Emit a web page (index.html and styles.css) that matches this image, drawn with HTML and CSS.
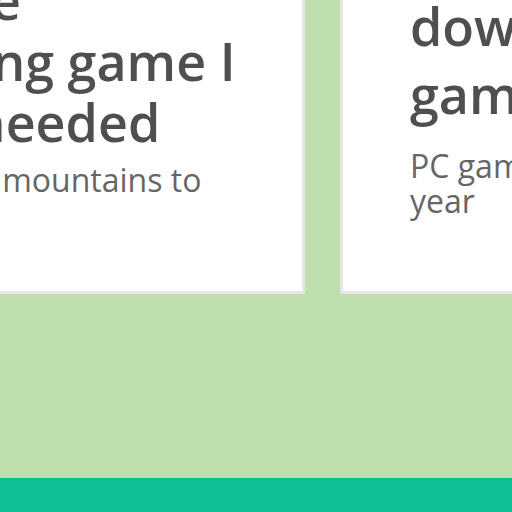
FILE: index.html
```html
<!DOCTYPE html>
<html>
<head>
<meta charset="utf-8">
<link rel="stylesheet" href="styles.css">
</head>
<body>
<main class="page">
  <section class="cards">
    <article class="card card-main">
      <h2 class="card-title">Alto’s Odyssey<br>It’s the<br>relaxing game I<br>only needed</h2>
      <p class="card-text">Along the mountains to</p>
    </article>
    <article class="card card-alt">
      <h2 class="card-title">Best free<br>downloadable<br>games</h2>
      <p class="card-text">PC games to play this<br>year</p>
    </article>
  </section>
  <footer class="footer"></footer>
</main>
</body>
</html>
```

FILE: styles.css
```css
html, body {
  margin: 0;
  padding: 0;
}
body {
  background: #bfe0ae;
  font-family: "Open Sans", "Noto Sans", sans-serif;
  overflow: hidden;
  width: 512px;
  height: 512px;
}
.page {
  display: flex;
  flex-direction: column;
}
.cards {
  display: flex;
  gap: 35px;
  margin-top: -135px;
  margin-left: -228px;
  align-items: stretch;
}
.card {
  flex: 0 0 auto;
  width: 533px;
  min-width: 0;
  box-sizing: border-box;
  background: #fff;
  border: 3px solid #e6e6e6;
  padding: 40px 67px 94px 67px;
}
.card-main {
  padding-left: 77px;
}
.card-title {
  margin: 0;
  font-size: 52px;
  font-weight: 600;
  line-height: 61px;
  color: #4f4f4f;
  white-space: nowrap;
}
.card-text {
  margin: 10px 0 0;
  font-size: 32px;
  line-height: 35px;
  color: #666;
  white-space: nowrap;
}
.card-alt {
  padding-bottom: 40px;
}
.card-alt .card-title {
  margin-top: 16px;
  line-height: 68px;
}
.card-alt .card-text {
  margin-top: 20px;
}
.footer {
  margin-top: 184px;
  height: 60px;
  background: #10be94;
}
```
